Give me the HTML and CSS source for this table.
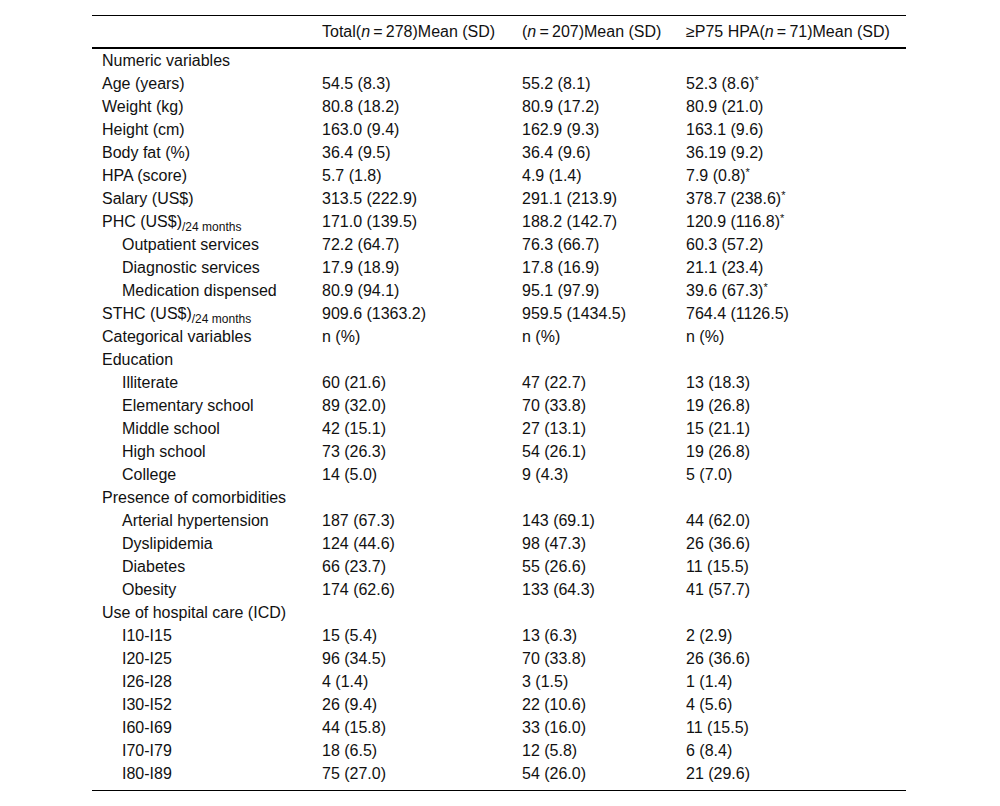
FILE: index.html
```html
<!DOCTYPE html>
<html>
<head>
<meta charset="utf-8">
<link rel="stylesheet" href="styles.css">
</head>
<body>
<div class="page">
<table class="data">
<colgroup><col class="c1"><col class="c2"><col class="c3"><col class="c4"></colgroup>
<thead>
<tr><th></th><th>Total(<i>n</i>&#8201;=&#8201;278)Mean (SD)</th><th>(<i>n</i>&#8201;=&#8201;207)Mean (SD)</th><th>≥P75 HPA(<i>n</i>&#8201;=&#8201;71)Mean (SD)</th></tr>
</thead>
<tbody>
<tr><td>Numeric variables</td><td></td><td></td><td></td></tr>
<tr><td>Age (years)</td><td>54.5 (8.3)</td><td>55.2 (8.1)</td><td>52.3 (8.6)<sup>*</sup></td></tr>
<tr><td>Weight (kg)</td><td>80.8 (18.2)</td><td>80.9 (17.2)</td><td>80.9 (21.0)</td></tr>
<tr><td>Height (cm)</td><td>163.0 (9.4)</td><td>162.9 (9.3)</td><td>163.1 (9.6)</td></tr>
<tr><td>Body fat (%)</td><td>36.4 (9.5)</td><td>36.4 (9.6)</td><td>36.19 (9.2)</td></tr>
<tr><td>HPA (score)</td><td>5.7 (1.8)</td><td>4.9 (1.4)</td><td>7.9 (0.8)<sup>*</sup></td></tr>
<tr><td>Salary (US$)</td><td>313.5 (222.9)</td><td>291.1 (213.9)</td><td>378.7 (238.6)<sup>*</sup></td></tr>
<tr><td>PHC (US$)<sub>/24 months</sub></td><td>171.0 (139.5)</td><td>188.2 (142.7)</td><td>120.9 (116.8)<sup>*</sup></td></tr>
<tr><td class="ind">Outpatient services</td><td>72.2 (64.7)</td><td>76.3 (66.7)</td><td>60.3 (57.2)</td></tr>
<tr><td class="ind">Diagnostic services</td><td>17.9 (18.9)</td><td>17.8 (16.9)</td><td>21.1 (23.4)</td></tr>
<tr><td class="ind">Medication dispensed</td><td>80.9 (94.1)</td><td>95.1 (97.9)</td><td>39.6 (67.3)<sup>*</sup></td></tr>
<tr><td>STHC (US$)<sub>/24 months</sub></td><td>909.6 (1363.2)</td><td>959.5 (1434.5)</td><td>764.4 (1126.5)</td></tr>
<tr><td>Categorical variables</td><td>n (%)</td><td>n (%)</td><td>n (%)</td></tr>
<tr><td>Education</td><td></td><td></td><td></td></tr>
<tr><td class="ind">Illiterate</td><td>60 (21.6)</td><td>47 (22.7)</td><td>13 (18.3)</td></tr>
<tr><td class="ind">Elementary school</td><td>89 (32.0)</td><td>70 (33.8)</td><td>19 (26.8)</td></tr>
<tr><td class="ind">Middle school</td><td>42 (15.1)</td><td>27 (13.1)</td><td>15 (21.1)</td></tr>
<tr><td class="ind">High school</td><td>73 (26.3)</td><td>54 (26.1)</td><td>19 (26.8)</td></tr>
<tr><td class="ind">College</td><td>14 (5.0)</td><td>9 (4.3)</td><td>5 (7.0)</td></tr>
<tr><td>Presence of comorbidities</td><td></td><td></td><td></td></tr>
<tr><td class="ind">Arterial hypertension</td><td>187 (67.3)</td><td>143 (69.1)</td><td>44 (62.0)</td></tr>
<tr><td class="ind">Dyslipidemia</td><td>124 (44.6)</td><td>98 (47.3)</td><td>26 (36.6)</td></tr>
<tr><td class="ind">Diabetes</td><td>66 (23.7)</td><td>55 (26.6)</td><td>11 (15.5)</td></tr>
<tr><td class="ind">Obesity</td><td>174 (62.6)</td><td>133 (64.3)</td><td>41 (57.7)</td></tr>
<tr><td>Use of hospital care (ICD)</td><td></td><td></td><td></td></tr>
<tr><td class="ind">I10-I15</td><td>15 (5.4)</td><td>13 (6.3)</td><td>2 (2.9)</td></tr>
<tr><td class="ind">I20-I25</td><td>96 (34.5)</td><td>70 (33.8)</td><td>26 (36.6)</td></tr>
<tr><td class="ind">I26-I28</td><td>4 (1.4)</td><td>3 (1.5)</td><td>1 (1.4)</td></tr>
<tr><td class="ind">I30-I52</td><td>26 (9.4)</td><td>22 (10.6)</td><td>4 (5.6)</td></tr>
<tr><td class="ind">I60-I69</td><td>44 (15.8)</td><td>33 (16.0)</td><td>11 (15.5)</td></tr>
<tr><td class="ind">I70-I79</td><td>18 (6.5)</td><td>12 (5.8)</td><td>6 (8.4)</td></tr>
<tr class="last"><td class="ind">I80-I89</td><td>75 (27.0)</td><td>54 (26.0)</td><td>21 (29.6)</td></tr>
</tbody>
</table>
</div>
</body>
</html>
```
FILE: styles.css
```css
html, body {
  margin: 0;
  padding: 0;
  background: #fff;
}
.page {
  padding: 15px 0 0 92px;
}
.data {
  border-collapse: collapse;
  table-layout: fixed;
  width: 814px;
  font-family: "Liberation Sans", Arial, sans-serif;
  font-size: 16px;
  color: #111;
  border-top: 1px solid #000;
  border-bottom: 1px solid #000;
}
.c1 { width: 220px; }
.c2 { width: 200px; }
.c3 { width: 164px; }
.c4 { width: 230px; }
.data th {
  font-weight: normal;
  text-align: left;
  height: 31px;
  padding: 0 0 0 10px;
  border-bottom: 2px solid #000;
  white-space: nowrap;
  vertical-align: middle;
}
.data td {
  height: 23px;
  padding: 0 0 0 10px;
  line-height: 23px;
  white-space: nowrap;
  vertical-align: middle;
}
.data td.ind {
  padding-left: 30px;
}
.data tr.last td {
  height: 28px;
  vertical-align: top;
}
.data sup {
  font-size: 11px;
  line-height: 0;
  vertical-align: 5px;
}
.data sub {
  font-size: 12px;
  line-height: 0;
  vertical-align: -4px;
}
```
